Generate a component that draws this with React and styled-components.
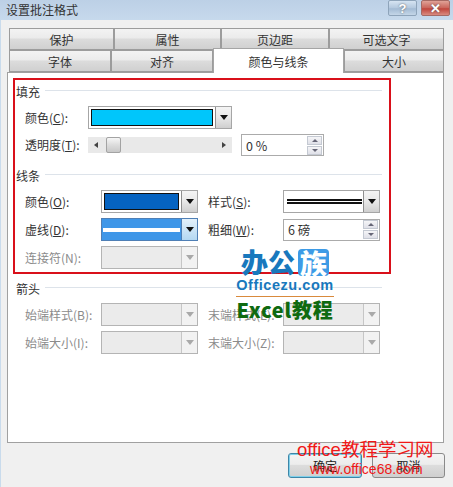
import React from "react";
import styled, { createGlobalStyle } from "styled-components";

const Global = createGlobalStyle`
  html, body { margin: 0; padding: 0; background: #f0f0f0; }
  body { font-family: "Noto Sans CJK SC", "Liberation Sans", sans-serif; font-size: 12px; color: #333; }
`;
const Win = styled.div`
  position: relative; width: 453px; height: 487px; overflow: hidden;
  background: #bdd2e8;
  display: flex; flex-direction: column;
`;
const TitleBar = styled.div`
  height: 20px; flex: none; display: flex; align-items: center; justify-content: space-between;
  padding: 0 3px 0 6px;
  background: linear-gradient(#bcd0e6, #c6d9ec);
`;
const Title = styled.div` font-size: 12px; color: #333; line-height: 20px; `;
const Ctrls = styled.div` display: flex; gap: 4px; margin-top: -4px; `;
const Ctrl = styled.div`
  width: ${p => p.$w}px; height: 16px; border-radius: 2px; border: 1px solid ${p => p.$close ? "#a56a64" : "#8ea4ba"};
  box-sizing: border-box; display: flex; align-items: center; justify-content: center;
  color: #fff; font: bold 13px "Liberation Sans", sans-serif;
  background: ${p => p.$close ? "linear-gradient(#e0a297, #c9645a 50%, #c0453c 55%, #d98b80)" : "linear-gradient(#d6e4f2, #b3c8de 50%, #a3bbd4 55%, #c4d6e8)"};
  text-shadow: 0 0 2px #555;
`;
const Body = styled.div`
  flex: 1; background: #f0f0f0; display: flex; flex-direction: column; padding: 8px 9px 0 6px;
  border-left: 1px solid #c9dbec; box-sizing: border-box;
`;
const TabRow = styled.div` display: flex; height: 22px; padding-left: 2px; align-items: flex-end; position: relative; `;
const Tab = styled.div`
  width: ${p => p.$w}px; height: ${p => p.$active ? 25 : 22}px; box-sizing: border-box; flex: none;
  border: 1px solid ${p => p.$active ? "#a5a5a5" : "#9c9c9c"}; border-bottom: ${p => p.$active ? "none" : "1px solid #9c9c9c"};
  position: relative; z-index: ${p => p.$active ? 2 : 1};
  margin-bottom: ${p => p.$active ? -1 : 0}px;
  display: flex; align-items: center; justify-content: center; font-size: 12px; color: #333;
  background: ${p => p.$active ? "#fff" : "linear-gradient(#f3f3f3, #ebebeb 45%, #dcdcdc 50%, #d0d0d0)"};
`;
const Panel = styled.div`
  height: 371px; box-sizing: border-box; background: #fff; border: 1px solid #a0a0a0;
  padding: 9px 0 0 8px; display: flex; flex-direction: column;
`;
const Section = styled.div`
  display: flex; align-items: center; gap: 5px; height: 18px; margin: ${p => p.$m || "0"}; width: 366px; font-size: 12px;
  &::after { content: ""; flex: 1; height: 1px; background: #dde3ea; margin-top: -2px; }
`;
const Row = styled.div`
  display: flex; align-items: center; height: ${p => p.$h || 23}px; margin-top: ${p => p.$mt || 0}px; padding-left: 9px;
`;
const Label = styled.div`
  width: ${p => p.$w}px; flex: none; font-size: 12px; line-height: 16px; white-space: nowrap;
  color: ${p => p.$off ? "#8b8b8b" : "#333"};
  u { text-underline-offset: 1px; }
`;
const Select = styled.div`
  width: ${p => p.$w}px; height: 23px; box-sizing: border-box; flex: none; display: flex;
  border: 1px solid ${p => p.$focus ? "#4f7fb5" : p.$off ? "#b4b4b4" : "#a6a6a6"};
  background: ${p => p.$focus ? "#3f97e8" : p.$off ? "#ebebeb" : "#fff"};
  padding: ${p => p.$focus || p.$off ? 0 : "2px 0 2px 2px"};
  margin-right: ${p => p.$mr || 0}px;
`;
const EmptyValue = styled.div` flex: 1; `;
const Swatch = styled.div`
  flex: 1; margin-right: 2px; border: 1px solid #111; background: ${p => p.$c}; box-sizing: border-box;
`;
const LineFill = styled.div`
  flex: 1; display: flex; flex-direction: column; justify-content: center; gap: ${p => p.$gap || 0}px; padding: 0 1px;
`;
const Stroke = styled.i`
  display: block; height: ${p => p.$h}px; background: ${p => p.$c};
`;
const DropBtn = styled.div`
  width: 16px; flex: none; box-sizing: border-box; display: flex; align-items: center; justify-content: center;
  margin: ${p => p.$flush ? "0" : "-2px 0"};
  border-left: 1px solid ${p => p.$focus ? "#4f7fb5" : p.$off ? "#c6c6c6" : "#8f8f8f"};
  background: ${p => p.$focus ? "linear-gradient(#e3f1fb, #b4d8f2)" : p.$off ? "#f2f2f2" : "linear-gradient(#f4f4f4, #e8e8e8 50%, #cfcfcf)"};
  &::after { content: ""; border: 4px solid transparent; border-bottom: 0; border-top: 5px solid ${p => p.$off ? "#a9a9a9" : "#111"}; }
`;
const Slider = styled.div`
  width: 144px; height: 16px; background: #e9e9e9; display: flex; align-items: center; justify-content: space-between;
  padding: 0 6px; box-sizing: border-box; margin-right: 9px; position: relative;
`;
const Arrow = styled.span`
  border: 3px solid transparent; ${p => p.$left ? "border-right: 4px solid #444; border-left: 0;" : "border-left: 4px solid #444; border-right: 0;"}
`;
const Thumb = styled.div`
  position: absolute; left: 18px; top: 0; width: 15px; height: 16px; box-sizing: border-box;
  border: 1px solid #a3a3a3; border-radius: 2px; background: linear-gradient(#f6f6f6, #dcdcdc 50%, #c8c8c8);
`;
const Spin = styled.div`
  width: ${p => p.$w}px; height: ${p => p.$h || 22}px; box-sizing: border-box; flex: none; display: flex; align-items: center;
  border: 1px solid #ababab; background: #fff; padding-left: 4px; justify-content: space-between; font-size: 12.5px;
`;
const SpinBtns = styled.div`
  width: 15px; height: 100%; display: flex; flex-direction: column; justify-content: center; gap: 1px; margin-right: 1px;
`;
const SpinBtn = styled.div`
  height: 9px; display: flex; align-items: center; justify-content: center; border: 1px solid #c4c9d2; box-sizing: border-box;
  background: linear-gradient(#f5f5f7, #dfe0e8);
  &::after { content: ""; border: 3px solid transparent; ${p => p.$up ? "border-top: 0; border-bottom: 3px solid #667;" : "border-bottom: 0; border-top: 3px solid #667;"} }
`;
const Footer = styled.div` display: flex; justify-content: flex-end; gap: 10px; margin: 10px -1px 0 0; `;
const Btn = styled.div`
  width: ${p => p.$w}px; height: 25px; box-sizing: border-box; border-radius: 3px; display: flex; align-items: center; justify-content: center;
  border: 1px solid ${p => p.$primary ? "#3d86a8" : "#8a8a8a"}; font-size: 12px; color: #222;
  background: linear-gradient(#f4f4f4, #ececec 45%, #dcdcdc 50%, #cfcfcf);
  box-shadow: ${p => p.$primary ? "inset 0 0 0 1px #7fd0ea" : "none"};
`;
const RedBox = styled.div`
  position: absolute; left: 13px; top: 78px; width: 378px; height: 196px; box-sizing: border-box; border: 2px solid #d9101a; pointer-events: none;
`;
const Logo = styled.div`
  position: absolute; left: 235px; top: 247px; width: 100px; display: flex; flex-direction: column; align-items: center; z-index: 5;
`;
const LogoCn = styled.div`
  display: flex; height: 30px; align-items: center; font: 900 27px/30px "Noto Sans CJK SC", sans-serif; color: #1878bd; justify-content: center;
  b { background: #3d9be6; color: #fff; border-radius: 4px; font-weight: 900; margin-left: 3px; padding: 0 2px; line-height: 27px; }
`;
const LogoEn = styled.div` font: bold 14.5px/16px "Liberation Sans", sans-serif; color: #1878bd; letter-spacing: .55px; `;
const LogoRule = styled.div` width: 98px; height: 1px; background: #d98a3c; margin: 3px 0 1px; `;
const LogoTag = styled.div` font: 900 20px/24px "Noto Sans CJK SC", sans-serif; color: #0f6a10; white-space: nowrap; letter-spacing: .8px; `;
const Mark = styled.div`
  position: absolute; left: ${p => p.$x}px; top: ${p => p.$y}px; color: #f01818; font: ${p => p.$s}px/${p => p.$s + 2}px "Liberation Sans", "Noto Sans CJK SC", sans-serif; white-space: nowrap; z-index: 5;
`;

const Dd = ({ w, mr, children, focus, off }) => (
  <Select $w={w} $mr={mr} $focus={focus} $off={off}>
    {children || <EmptyValue />}
    <DropBtn $focus={focus} $off={off} $flush={focus || off} />
  </Select>
);
const Spinner = ({ w, text, h }) => (
  <Spin $w={w} $h={h}>
    <span>{text}</span>
    <SpinBtns><SpinBtn $up /><SpinBtn /></SpinBtns>
  </Spin>
);

export default function App() {
  return (
    <Win>
      <Global />
      <TitleBar>
        <Title>设置批注格式</Title>
        <Ctrls><Ctrl $w={29}>?</Ctrl><Ctrl $w={29} $close>✕</Ctrl></Ctrls>
      </TitleBar>
      <Body>
        <TabRow>
          <Tab $w={105}>保护</Tab><Tab $w={107}>属性</Tab><Tab $w={108}>页边距</Tab><Tab $w={115}>可选文字</Tab>
        </TabRow>
        <TabRow>
          <Tab $w={102}>字体</Tab><Tab $w={102}>对齐</Tab><Tab $w={131} $active>颜色与线条</Tab><Tab $w={100}>大小</Tab>
        </TabRow>
        <Panel>
          <Section>填充</Section>
          <Row $mt={6}>
            <Label $w={63}>颜色(<u>C</u>):</Label>
            <Dd w={144}><Swatch $c="#00c6fb" /></Dd>
          </Row>
          <Row $mt={5} $h={22}>
            <Label $w={63}>透明度(<u>T</u>):</Label>
            <Slider><Arrow $left /><Thumb /><Arrow /></Slider>
            <Spinner w={83} text="0 %" />
          </Row>
          <Section $m="10px 0 0">线条</Section>
          <Row $mt={6}>
            <Label $w={76}>颜色(<u>O</u>):</Label>
            <Dd w={97} mr={10}><Swatch $c="#0563c1" /></Dd>
            <Label $w={75}>样式(<u>S</u>):</Label>
            <Dd w={97}><LineFill $gap={1}><Stroke $h={2} $c="#111" /><Stroke $h={2} $c="#111" /></LineFill></Dd>
          </Row>
          <Row $mt={5}>
            <Label $w={76}>虚线(<u>D</u>):</Label>
            <Dd w={97} mr={10} focus><LineFill><Stroke $h={4} $c="#fff" /></LineFill></Dd>
            <Label $w={75}>粗细(<u>W</u>):</Label>
            <Spinner w={97} text="6 磅" />
          </Row>
          <Row $mt={5}>
            <Label $w={76} $off>连接符(N):</Label>
            <Dd w={97} off />
          </Row>
          <Section $m="10px 0 0">箭头</Section>
          <Row $mt={6}>
            <Label $w={76} $off>始端样式(B):</Label>
            <Dd w={97} mr={10} off />
            <Label $w={75} $off>末端样式(E):</Label>
            <Dd w={97} off />
          </Row>
          <Row $mt={5}>
            <Label $w={76} $off>始端大小(I):</Label>
            <Dd w={97} mr={10} off />
            <Label $w={75} $off>末端大小(Z):</Label>
            <Dd w={97} off />
          </Row>
        </Panel>
        <Footer>
          <Btn $w={74} $primary>确定</Btn>
          <Btn $w={73}>取消</Btn>
        </Footer>
      </Body>
      <RedBox />
      <Logo>
        <LogoCn>办公<b>族</b></LogoCn>
        <LogoEn>Officezu.com</LogoEn>
        <LogoRule />
        <LogoTag>Excel教程</LogoTag>
      </Logo>
      <Mark $x={297} $y={440} $s={18.5}>office教程学习网</Mark>
      <Mark $x={310} $y={461} $s={14}>www.office68.com</Mark>
    </Win>
  );
}
